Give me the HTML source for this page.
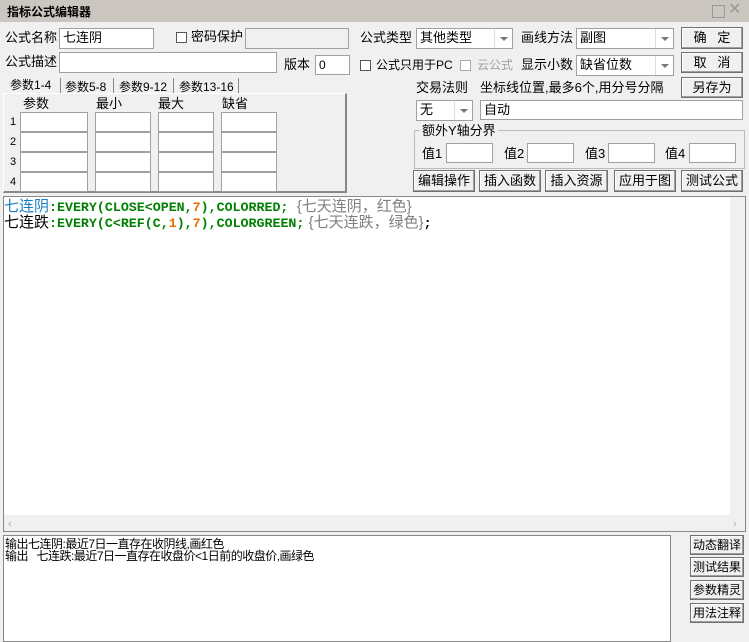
<html><head><style>
body{margin:0;width:749px;height:642px;background:#f0f0f0;font-family:"Liberation Sans","Noto Sans CJK SC",sans-serif;font-size:12px;position:relative;overflow:hidden;color:#000}
.a{position:absolute;white-space:nowrap;line-height:14px}
.in{position:absolute;background:#fff;border:1px solid #a0a0a0;box-sizing:border-box;font-size:13px;padding-left:3px;line-height:18px}
.btn{position:absolute;background:#f0f0f0;border:1px solid #707070;box-shadow:inset -1px -1px 0 #a0a0a0,inset 1px 1px 0 #fff;box-sizing:border-box;text-align:center;font-size:13px}
.cb{position:absolute;width:11px;height:11px;border:1px solid #555;background:#fff;box-sizing:border-box}
.dd{position:absolute;right:0;top:0;width:18px;height:100%;border-left:1px solid #ddd;box-sizing:border-box}
.dd:after{content:"";position:absolute;left:5px;top:8px;border:4px solid transparent;border-top:4px solid #777}
.code{font-family:"Liberation Mono",monospace;font-weight:bold;color:#008000;font-size:13.3px}
</style></head><body>
<div class="a" style="left:0;top:0;width:749px;height:22px;background:#cbc7c0"></div>
<div class="a" style="left:7px;top:5px;font-weight:bold;font-size:12px">指标公式编辑器</div>
<div class="a" style="left:712px;top:5px;width:11px;height:11px;border:1px solid #999"></div>
<div class="a" style="left:728px;top:3px;color:#999;font-size:16px">✕</div>

<div class="a" style="left:5px;top:31px;font-size:13px">公式名称</div>
<div class="in" style="left:59px;top:28px;width:95px;height:21px">七连阴</div>
<div class="cb" style="left:176px;top:32px"></div>
<div class="a" style="left:191px;top:30px;font-size:13px">密码保护</div>
<div class="in" style="left:245px;top:28px;width:104px;height:21px;background:#f0f0f0"></div>
<div class="a" style="left:360px;top:31px;font-size:13px">公式类型</div>
<div class="in" style="left:416px;top:28px;width:97px;height:21px">其他类型<div class="dd"></div></div>
<div class="a" style="left:521px;top:31px;font-size:13px">画线方法</div>
<div class="in" style="left:576px;top:28px;width:98px;height:21px">副图<div class="dd"></div></div>
<div class="btn" style="left:681px;top:27px;width:62px;height:22px;line-height:20px">确&nbsp;&nbsp;&nbsp;定</div>

<div class="a" style="left:5px;top:55px;font-size:13px">公式描述</div>
<div class="in" style="left:59px;top:52px;width:218px;height:21px"></div>
<div class="a" style="left:284px;top:58px;font-size:13px">版本</div>
<div class="in" style="left:315px;top:55px;width:35px;height:20px;font-size:12px;line-height:18px">0</div>
<div class="cb" style="left:360px;top:60px"></div>
<div class="a" style="left:376px;top:58px;font-size:12px">公式只用于PC</div>
<div class="cb" style="left:460px;top:60px;border-color:#aaa"></div>
<div class="a" style="left:477px;top:58px;font-size:12px;color:#a0a0a0">云公式</div>
<div class="a" style="left:521px;top:58px;font-size:13px">显示小数</div>
<div class="in" style="left:576px;top:55px;width:98px;height:21px">缺省位数<div class="dd"></div></div>
<div class="btn" style="left:681px;top:52px;width:62px;height:21px;line-height:19px">取&nbsp;&nbsp;&nbsp;消</div>

<div class="a" style="left:10px;top:78px;font-size:12px">参数1-4</div>
<div class="a" style="left:60px;top:78px;height:15px;border-left:1px solid #888"></div>
<div class="a" style="left:65px;top:80px;font-size:12px">参数5-8</div>
<div class="a" style="left:113px;top:78px;height:15px;border-left:1px solid #888"></div>
<div class="a" style="left:119px;top:80px;font-size:12px">参数9-12</div>
<div class="a" style="left:173px;top:78px;height:15px;border-left:1px solid #888"></div>
<div class="a" style="left:179px;top:80px;font-size:12px">参数13-16</div>
<div class="a" style="left:238px;top:78px;height:15px;border-left:1px solid #888"></div>
<div class="a" style="left:3px;top:93px;width:344px;height:100px;border:1px solid #fff;border-right:2px solid #888;border-bottom:2px solid #888;box-sizing:border-box"></div>
<div class="a" style="left:23px;top:97px;font-size:13px">参数</div>
<div class="a" style="left:96px;top:97px;font-size:13px">最小</div>
<div class="a" style="left:158px;top:97px;font-size:13px">最大</div>
<div class="a" style="left:222px;top:97px;font-size:13px">缺省</div>
<div class="a" style="left:10px;top:112px;font-size:11px;line-height:20px">1<br>2<br>3<br>4</div>
<div class="a" style="left:20px;top:112px">
<div class="in" style="left:0;top:0;width:68px;height:20px"></div><div class="in" style="left:75px;top:0;width:56px;height:20px"></div><div class="in" style="left:138px;top:0;width:56px;height:20px"></div><div class="in" style="left:201px;top:0;width:56px;height:20px"></div>
<div class="in" style="left:0;top:20px;width:68px;height:20px"></div><div class="in" style="left:75px;top:20px;width:56px;height:20px"></div><div class="in" style="left:138px;top:20px;width:56px;height:20px"></div><div class="in" style="left:201px;top:20px;width:56px;height:20px"></div>
<div class="in" style="left:0;top:40px;width:68px;height:20px"></div><div class="in" style="left:75px;top:40px;width:56px;height:20px"></div><div class="in" style="left:138px;top:40px;width:56px;height:20px"></div><div class="in" style="left:201px;top:40px;width:56px;height:20px"></div>
<div class="in" style="left:0;top:60px;width:68px;height:20px"></div><div class="in" style="left:75px;top:60px;width:56px;height:20px"></div><div class="in" style="left:138px;top:60px;width:56px;height:20px"></div><div class="in" style="left:201px;top:60px;width:56px;height:20px"></div>
</div>

<div class="a" style="left:416px;top:81px;font-size:13px">交易法则</div>
<div class="a" style="left:480px;top:81px;font-size:13px">坐标线位置,最多6个,用分号分隔</div>
<div class="btn" style="left:681px;top:77px;width:62px;height:21px;line-height:19px">另存为</div>
<div class="in" style="left:416px;top:100px;width:57px;height:21px">无<div class="dd"></div></div>
<div class="in" style="left:480px;top:100px;width:263px;height:20px">自动</div>
<div class="a" style="left:414px;top:130px;width:329px;height:37px;border:1px solid #bbb"></div>
<div class="a" style="left:420px;top:124px;font-size:13px;background:#f0f0f0;padding:0 2px">额外Y轴分界</div>
<div class="a" style="left:422px;top:147px;font-size:13px">值1</div><div class="in" style="left:446px;top:143px;width:47px;height:20px"></div>
<div class="a" style="left:504px;top:147px;font-size:13px">值2</div><div class="in" style="left:527px;top:143px;width:47px;height:20px"></div>
<div class="a" style="left:585px;top:147px;font-size:13px">值3</div><div class="in" style="left:608px;top:143px;width:47px;height:20px"></div>
<div class="a" style="left:665px;top:147px;font-size:13px">值4</div><div class="in" style="left:689px;top:143px;width:47px;height:20px"></div>
<div class="btn" style="left:413px;top:170px;width:62px;height:22px;line-height:20px">编辑操作</div>
<div class="btn" style="left:479px;top:170px;width:62px;height:22px;line-height:20px">插入函数</div>
<div class="btn" style="left:545px;top:170px;width:63px;height:22px;line-height:20px">插入资源</div>
<div class="btn" style="left:614px;top:170px;width:62px;height:22px;line-height:20px">应用于图</div>
<div class="btn" style="left:681px;top:170px;width:62px;height:22px;line-height:20px">测试公式</div>

<div class="a" style="left:3px;top:196px;width:743px;height:336px;background:#fff;border:1px solid #888;box-sizing:border-box"></div>
<div class="a" style="left:4px;top:199px;line-height:15px;font-size:15px">
<div><span style="color:#1a7fc0">七连阴</span><span class="code">:EVERY(CLOSE&lt;OPEN,<span style="color:#e07000">7</span>),COLORRED;</span>&nbsp;&nbsp;<span style="color:#808080">{七天连阴，红色}</span></div>
<div>七连跌<span class="code">:EVERY(C&lt;REF(C,<span style="color:#e07000">1</span>),<span style="color:#e07000">7</span>),COLORGREEN;</span><span style="color:#808080"> {七天连跌，绿色}</span><span class="code" style="color:#000">;</span></div>
</div>
<div class="a" style="left:730px;top:197px;width:15px;height:318px;background:#f0f0f0"></div>
<div class="a" style="left:4px;top:515px;width:741px;height:16px;background:#f0f0f0"></div>
<div class="a" style="left:8px;top:517px;color:#aaa;font-size:11px">‹</div>
<div class="a" style="left:733px;top:517px;color:#aaa;font-size:11px">›</div>

<div class="a" style="left:3px;top:535px;width:668px;height:107px;background:#fff;border:1px solid #888;box-sizing:border-box"></div>
<div class="a" style="left:5px;top:538px;font-size:12px;line-height:12px;letter-spacing:-0.5px">输出七连阴:最近7日一直存在收阴线,画红色<br>输出&nbsp;&nbsp;&nbsp;七连跌:最近7日一直存在收盘价&lt;1日前的收盘价,画绿色</div>
<div class="a" style="left:671px;top:535px;width:18px;height:107px;background:#f0f0f0"></div>
<div class="btn" style="left:690px;top:535px;width:54px;height:20px;line-height:18px;font-size:12px">动态翻译</div>
<div class="btn" style="left:690px;top:557px;width:54px;height:20px;line-height:18px;font-size:12px">测试结果</div>
<div class="btn" style="left:690px;top:580px;width:54px;height:20px;line-height:18px;font-size:12px">参数精灵</div>
<div class="btn" style="left:690px;top:603px;width:54px;height:20px;line-height:18px;font-size:12px">用法注释</div>
</body></html>
